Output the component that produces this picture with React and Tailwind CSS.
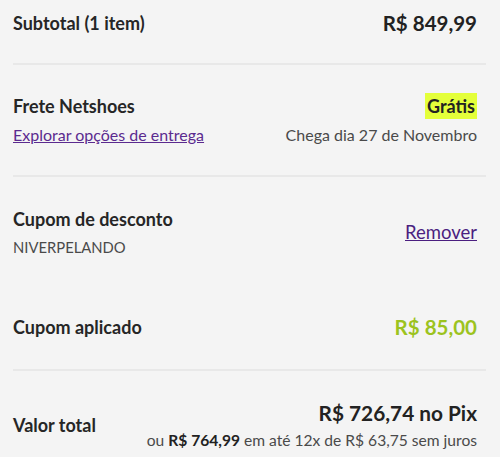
import React from 'react'

const font = { fontFamily: 'Lato, "Open Sans", sans-serif' }

function Divider() {
  return <div className="h-[2px] bg-[#e8e8e8]" />
}

function Label({ children }) {
  return <span className="text-[18px] leading-[26px] font-bold text-[#262626]">{children}</span>
}

export default function App() {
  return (
    <div className="min-h-[457px] w-[500px] bg-[#f4f4f4] text-[#222]" style={font}>
      <div className="w-[473px] pl-[13px] box-content">
        {/* subtotal */}
        <div className="flex items-center justify-between pt-[10px] pb-[27px] pr-[9px]">
          <Label>Subtotal (1 item)</Label>
          <span className="text-[20.5px] leading-[26px] font-bold">R$ 849,99</span>
        </div>
        <Divider />

        {/* frete */}
        <div className="flex items-center justify-between pt-[28px] pb-[30px] pr-[9px]">
          <div className="flex flex-col items-start">
            <Label>Frete Netshoes</Label>
            <a href="#" className="mt-[6px] text-[16px] leading-5 text-[#5b2a8f] underline">
              Explorar opções de entrega
            </a>
          </div>
          <div className="flex flex-col items-end">
            <span className="bg-[#e4ff3a] px-[2px] text-[18px] leading-[26px] font-bold">Grátis</span>
            <span className="mt-[6px] text-[16px] leading-5 text-[#4a4a4a]">Chega dia 27 de Novembro</span>
          </div>
        </div>
        <Divider />

        {/* cupom */}
        <div className="flex flex-col gap-[57px] pt-[29px] pb-[29px] pr-[9px]">
          <div className="flex items-center justify-between">
            <div className="flex flex-col">
              <Label>Cupom de desconto</Label>
              <span className="mt-[5px] text-[14.8px] leading-5 text-[#4a4a4a]">NIVERPELANDO</span>
            </div>
            <a href="#" className="text-[18.5px] leading-6 text-[#4b1f80] underline">Remover</a>
          </div>
          <div className="flex items-center justify-between">
            <Label>Cupom aplicado</Label>
            <span className="text-[20.5px] leading-[26px] font-bold text-[#9cc31e]">R$ 85,00</span>
          </div>
        </div>
        <Divider />

        {/* total */}
        <div className="flex items-center justify-between pt-[29px] pb-[6px] pr-[9px]">
          <Label>Valor total</Label>
          <div className="flex flex-col items-end">
            <span className="text-[20.8px] leading-[26px] font-bold">R$ 726,74 no Pix</span>
            <span className="mt-[4px] text-[15.6px] leading-5 text-[#4a4a4a]">
              ou <b className="font-bold text-[#222]">R$ 764,99</b> em até 12x de R$ 63,75 sem juros
            </span>
          </div>
        </div>
      </div>
    </div>
  )
}
